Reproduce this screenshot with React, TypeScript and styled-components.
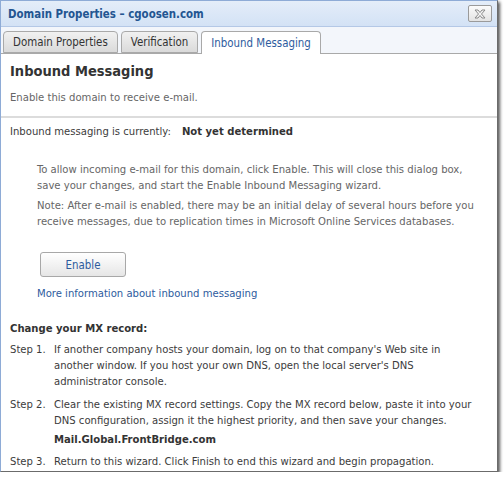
import React from "react"
import styled, { createGlobalStyle } from "styled-components"

const GlobalStyle = createGlobalStyle`
  html, body {
    margin: 0;
    padding: 0;
    background: #ffffff;
  }
  body {
    font-family: "DejaVu Sans Condensed", "Liberation Sans", sans-serif;
  }
`

const Window = styled.div`
  width: 498px;
  height: 472px;
  box-sizing: border-box;
  border: 1px solid #8eabd6;
  border-right-color: #6b6b6b;
  border-bottom-color: #6b6b6b;
  box-shadow: 2px 2px 3px rgba(0, 0, 0, 0.65);
  background: #fff;
  display: flex;
  flex-direction: column;
  overflow: hidden;
`

const TitleBar = styled.div`
  height: 25px;
  flex: none;
  display: flex;
  align-items: center;
  justify-content: space-between;
  padding: 0 5px 0 7px;
  background: linear-gradient(#e4edf9, #d3e2f5);
  border-bottom: 1px solid #b4c8e6;
`

const Title = styled.div`
  font-size: 11.4px;
  font-weight: bold;
  color: #235591;
`

const CloseButton = styled.button`
  width: 24px;
  height: 17px;
  padding: 0;
  border: 1px solid #9a9a9a;
  border-radius: 2px;
  background: linear-gradient(#fbfbfb, #e3e3e3);
  display: flex;
  align-items: center;
  justify-content: center;
`

const TabStrip = styled.div`
  flex: none;
  display: flex;
  align-items: flex-end;
  gap: 3px;
  padding: 4px 0 0 2px;
  background: #f3f6fb;
  border-bottom: 1px solid #a9a9a9;
`

const Tab = styled.div<{ active?: boolean }>`
  height: ${({ active }) => (active ? 23 : 22)}px;
  margin-bottom: ${({ active }) => (active ? -1 : 0)}px;
  padding: 0 9px;
  display: flex;
  align-items: center;
  font-size: 11.4px;
  color: ${({ active }) => (active ? "#2e5c9e" : "#333")};
  border: 1px solid #a9a9a9;
  border-bottom: ${({ active }) => (active ? "none" : "1px solid #a9a9a9")};
  border-radius: 4px 4px 0 0;
  background: ${({ active }) =>
    active ? "#ffffff" : "linear-gradient(#f1f1f1, #dadada)"};
  box-sizing: border-box;
`

const Header = styled.div`
  padding: 9px 9px 12px;
  border-bottom: 2px solid #dcdcdc;
`

const Heading = styled.div`
  font-size: 14.5px;
  font-weight: bold;
  color: #333;
  margin-bottom: 12px;
`

const Sub = styled.div`
  font-size: 11.2px;
  color: #666;
`

const Body = styled.div`
  padding: 7px 18px 0 9px;
  font-size: 11.2px;
  color: #3c3c3c;
`

const StatusRow = styled.div`
  display: flex;
  gap: 11px;
`

const Strong = styled.span`
  font-weight: bold;
  color: #333;
`

const Indented = styled.div`
  padding: 24px 0 0 27px;
  color: #666;
  line-height: 16px;
`

const Para = styled.p`
  margin: 0 0 4px;
`

const Button = styled.button`
  display: block;
  margin: 22px 0 9px 3px;
  width: 86px;
  height: 25px;
  font-family: inherit;
  font-size: 11.4px;
  color: #2e5c9e;
  border: 1px solid #a8a8a8;
  border-radius: 3px;
  background: linear-gradient(#ffffff, #e6e6e6);
`

const Link = styled.a`
  display: block;
  color: #2e5c9e;
  text-decoration: none;
`

const SectionTitle = styled.div`
  margin-top: 20px;
  font-weight: bold;
  color: #333;
`

const Steps = styled.div`
  margin-top: 7px;
  display: grid;
  grid-template-columns: 44px 1fr;
  row-gap: 7px;
  line-height: 16px;
  color: #3c3c3c;
`

const Record = styled.div`
  margin: -4px 0 -1px;
  font-weight: bold;
  color: #333;
`

const App: React.FC = () => (
  <>
    <GlobalStyle />
    <Window>
      <TitleBar>
        <Title>Domain Properties – cgoosen.com</Title>
        <CloseButton aria-label="Close">
          <svg width="12" height="10" viewBox="0 0 12 10">
            <path
              d="M1 1 L4 1 L6 3.5 L8 1 L11 1 L7.5 5 L11 9 L8 9 L6 6.5 L4 9 L1 9 L4.5 5 Z"
              fill="#f4f4f4"
              stroke="#8a8a8a"
              strokeWidth="1"
              strokeLinejoin="round"
            />
          </svg>
        </CloseButton>
      </TitleBar>

      <TabStrip>
        <Tab>Domain Properties</Tab>
        <Tab>Verification</Tab>
        <Tab active>Inbound Messaging</Tab>
      </TabStrip>

      <Header>
        <Heading>Inbound Messaging</Heading>
        <Sub>Enable this domain to receive e-mail.</Sub>
      </Header>

      <Body>
        <StatusRow>
          <span>Inbound messaging is currently:</span>
          <Strong>Not yet determined</Strong>
        </StatusRow>

        <Indented>
          <Para>
            To allow incoming e-mail for this domain, click Enable. This will
            close this dialog box, save your changes, and start the Enable
            Inbound Messaging wizard.
          </Para>
          <Para>
            Note: After e-mail is enabled, there may be an initial delay of
            several hours before you receive messages, due to replication times
            in Microsoft Online Services databases.
          </Para>
          <Button>Enable</Button>
          <Link href="#">More information about inbound messaging</Link>
        </Indented>

        <SectionTitle>Change your MX record:</SectionTitle>
        <Steps>
          <span>Step 1.</span>
          <span>
            If another company hosts your domain, log on to that company's Web
            site in another window. If you host your own DNS, open the local
            server's DNS administrator console.
          </span>
          <span>Step 2.</span>
          <span>
            Clear the existing MX record settings. Copy the MX record below,
            paste it into your DNS configuration, assign it the highest
            priority, and then save your changes.
          </span>
          <span />
          <Record>Mail.Global.FrontBridge.com</Record>
          <span>Step 3.</span>
          <span>
            Return to this wizard. Click Finish to end this wizard and begin
            propagation.
          </span>
        </Steps>
      </Body>
    </Window>
  </>
)

export default App
